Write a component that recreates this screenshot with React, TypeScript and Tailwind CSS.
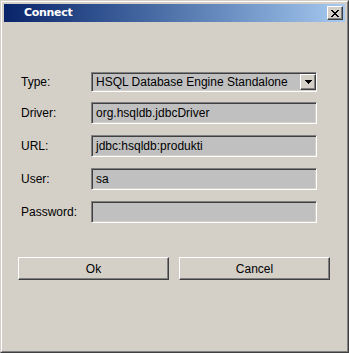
import React from "react";

const sunken =
  "border border-t-[#808080] border-l-[#808080] border-b-white border-r-white shadow-[inset_1px_1px_0_#404040,inset_-1px_-1px_0_#d4d0c8]";
const raised =
  "border border-t-white border-l-white border-b-[#404040] border-r-[#404040] shadow-[inset_-1px_-1px_0_#808080]";

function Row({ label, value, mt }: { label: string; value: string; mt: string }) {
  return (
    <div className={`flex items-center ${mt}`}>
      <div className="w-[70px] text-[12px] text-black">{label}</div>
      <div className={`w-[226px] h-[22px] bg-[#c0c0c0] flex items-center pl-[4px] text-[12px] text-black ${sunken}`}>
        {value}
      </div>
    </div>
  );
}

export default function App() {
  return (
    <div
      className="w-[349px] h-[353px] bg-[#d4d0c8] border border-t-[#d4d0c8] border-l-[#d4d0c8] border-b-[#404040] border-r-[#404040] overflow-hidden"
      style={{ fontFamily: '"Liberation Sans", Arial, sans-serif' }}
    >
      <div className="w-full h-full border border-t-white border-l-white border-b-[#808080] border-r-[#808080] p-[2px] flex flex-col">
        <div className="h-[18px] bg-gradient-to-r from-[#0a246a] to-[#a6caf0] flex items-center pl-[20px] pr-[2px]">
          <span
            className="text-white font-bold text-[11px] tracking-[-0.3px] flex-1"
            style={{ fontFamily: '"DejaVu Sans", Verdana, sans-serif' }}
          >
            Connect
          </span>
          <div className={`w-[16px] h-[14px] bg-[#d4d0c8] flex items-center justify-center ${raised}`}>
            <svg width="8" height="7" viewBox="0 0 8 7" shapeRendering="crispEdges">
              <path
                d="M0 0h2v1H0zM6 0h2v1H6zM1 1h2v1H1zM5 1h2v1H5zM2 2h4v1H2zM3 3h2v1H3zM2 4h4v1H2zM1 5h2v1H1zM5 5h2v1H5zM0 6h2v1H0zM6 6h2v1H6z"
                fill="#000"
              />
            </svg>
          </div>
        </div>
        <div className="flex flex-col pl-[17px] pt-[50px]">
          <div className="flex items-center">
            <div className="w-[70px] text-[12px] text-black">Type:</div>
            <div className={`w-[226px] h-[20px] bg-[#c0c0c0] flex items-center text-[12px] text-black ${sunken}`}>
              <span className="flex-1 pl-[4px] whitespace-nowrap overflow-hidden">HSQL Database Engine Standalone</span>
              <div className={`w-[16px] h-[16px] bg-[#d4d0c8] flex items-center justify-center ${raised}`}>
                <svg width="7" height="4" viewBox="0 0 7 4" shapeRendering="crispEdges">
                  <path d="M0 0h7v1H0zM1 1h5v1H1zM2 2h3v1H2zM3 3h1v1H3z" fill="#000" />
                </svg>
              </div>
            </div>
          </div>
          <Row label="Driver:" value="org.hsqldb.jdbcDriver" mt="mt-[10px]" />
          <Row label="URL:" value="jdbc:hsqldb:produkti" mt="mt-[11px]" />
          <Row label="User:" value="sa" mt="mt-[11px]" />
          <Row label="Password:" value="" mt="mt-[11px]" />
        </div>
        <div className="flex gap-[10px] pl-[14px] mt-[34px]">
          <div className={`w-[151px] h-[23px] bg-[#d4d0c8] flex items-center justify-center text-[12px] text-black ${raised}`}>
            Ok
          </div>
          <div className={`w-[151px] h-[23px] bg-[#d4d0c8] flex items-center justify-center text-[12px] text-black ${raised}`}>
            Cancel
          </div>
        </div>
      </div>
    </div>
  );
}
